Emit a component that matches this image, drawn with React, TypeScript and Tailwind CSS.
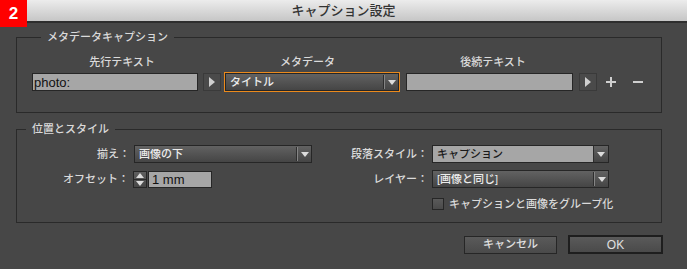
import React from "react";

const FONT = "font-[family-name:'Liberation_Sans','Noto_Sans_CJK_JP',sans-serif]";

function Tri({ up = false, color = "#dcdcdc" }: { up?: boolean; color?: string }) {
  return (
    <svg width="8" height="5" viewBox="0 0 8 5">
      <polygon points={up ? "0,5 8,5 4,0" : "0,0 8,0 4,5"} fill={color} />
    </svg>
  );
}

function DropArrow() {
  return (
    <div className="flex h-full items-center">
      <div className="h-[14px] w-px bg-[#2e2e2e]" />
      <div className="h-[14px] w-px bg-[#858585]" />
      <div className="flex w-[13px] justify-center">
        <Tri />
      </div>
    </div>
  );
}

function Select({
  text,
  w,
  light = false,
  focused = false,
}: {
  text: string;
  w: string;
  light?: boolean;
  focused?: boolean;
}) {
  const inner = (
    <div
      className={`flex h-[18px] items-center border border-[#262626] ${
        light
          ? "bg-[#a6a6a6] text-[#1a1a1a]"
          : "bg-gradient-to-b from-[#626262] to-[#454545] text-[#ececec]"
      }`}
    >
      <span className="flex-1 truncate pl-[4px] text-[11px] font-medium leading-none">{text}</span>
      {light ? (
        <div className="flex h-full items-center bg-gradient-to-b from-[#626262] to-[#454545]">
          <div className="h-full w-px bg-[#2e2e2e]" />
          <div className="flex w-[14px] justify-center">
            <Tri />
          </div>
        </div>
      ) : (
        <DropArrow />
      )}
    </div>
  );
  if (focused) {
    return <div className={`${w} border border-[#ec8a1c]`}>{inner}</div>;
  }
  return <div className={w}>{inner}</div>;
}

function Field({ text, w }: { text?: string; w: string }) {
  return (
    <div
      className={`${w} flex h-[18px] items-center border border-[#262626] bg-[#a6a6a6] pl-[1px] text-[13px] leading-none text-[#111]`}
    >
      {text}
    </div>
  );
}

function ArrowBtn() {
  return (
    <div className="flex h-[18px] w-[18px] items-center justify-center border border-[#3a3a3a] bg-[#4a4a4a]">
      <svg width="6" height="10" viewBox="0 0 6 10">
        <polygon points="0,0 6,5 0,10" fill="#d0d0d0" />
      </svg>
    </div>
  );
}

function Label({ children, w }: { children: React.ReactNode; w: string }) {
  return (
    <div className={`${w} shrink-0 pr-[4px] text-right text-[11px] font-medium leading-none text-[#dadada]`}>
      {children}
    </div>
  );
}

export default function App() {
  return (
    <div className={`${FONT} relative h-[269px] w-[687px] overflow-hidden bg-[#474747]`}>
      {/* title bar */}
      <div className="flex h-[23px] items-center justify-center border-b-2 border-[#2e2e2e] bg-gradient-to-b from-[#ececec] to-[#c6c6c6]">
        <span className="text-[13px] font-medium leading-none text-[#333]">キャプション設定</span>
      </div>
      <div className="absolute left-0 top-0 flex h-[27px] w-[27px] items-center justify-center bg-[#ff0000] text-[17px] font-bold leading-none text-white">
        2
      </div>

      <div className="pl-[16px] pr-[25px] pt-[7px]">
        {/* section 1 */}
        <fieldset className="border border-[#2a2a2a] pb-[20px] pl-[15px]">
          <legend className="ml-[9px] px-[6px] text-[11px] font-medium leading-[14px] text-[#dadada]">
            メタデータキャプション
          </legend>
          <div className="-ml-[15px] mt-[11px] flex text-[11px] font-medium leading-[14px] text-[#dadada]">
            <div className="w-[15px]" />
            <div className="w-[180px] text-center">先行テキスト</div>
            <div className="w-[191px] text-center">メタデータ</div>
            <div className="w-[180px] text-center">後続テキスト</div>
          </div>
          <div className="mt-[3px] flex items-center">
            <Field text="photo:" w="w-[166px]" />
            <div className="ml-[5px]">
              <ArrowBtn />
            </div>
            <div className="ml-[3px]">
              <Select text="タイトル" w="w-[176px]" focused />
            </div>
            <div className="ml-[6px]">
              <Field w="w-[167px]" />
            </div>
            <div className="ml-[6px]">
              <ArrowBtn />
            </div>
            <svg className="ml-[9px]" width="10" height="10" viewBox="0 0 10 10">
              <rect x="4" y="0" width="2" height="10" fill="#cfcfcf" />
              <rect x="0" y="4" width="10" height="2" fill="#cfcfcf" />
            </svg>
            <svg className="ml-[17px]" width="10" height="2" viewBox="0 0 10 2">
              <rect x="0" y="0" width="10" height="2" fill="#cfcfcf" />
            </svg>
          </div>
        </fieldset>

        {/* section 2 */}
        <fieldset className="mt-[9px] border border-[#2a2a2a] pb-[12px]">
          <legend className="ml-[9px] px-[6px] text-[11px] font-medium leading-[14px] text-[#dadada]">
            位置とスタイル
          </legend>
          <div className="mt-[9px] flex items-center">
            <div className="flex w-[295px] items-center">
              <Label w="w-[117px]">揃え：</Label>
              <Select text="画像の下" w="w-[178px]" />
            </div>
            <Label w="w-[120px]">段落スタイル：</Label>
            <Select text="キャプション" w="w-[177px]" light />
          </div>
          <div className="mt-[7px] flex items-center">
            <div className="flex w-[295px] items-center">
              <Label w="w-[116px]">オフセット：</Label>
              <div className="flex h-[17px] w-[14px] flex-col border border-[#262626] bg-gradient-to-b from-[#5e5e5e] to-[#474747]">
                <div className="flex flex-1 items-center justify-center border-b border-[#2a2a2a]">
                  <Tri up />
                </div>
                <div className="flex flex-1 items-center justify-center">
                  <Tri />
                </div>
              </div>
              <div className="ml-[1px] flex h-[17px] w-[64px] items-center border border-[#262626] bg-[#a6a6a6] pl-[3px] text-[13px] leading-none text-[#111]">
                1 mm
              </div>
            </div>
            <Label w="w-[120px]">レイヤー：</Label>
            <Select text="[画像と同じ]" w="w-[177px]" />
          </div>
          <div className="mt-[10px] flex items-center">
            <div className="w-[415px]" />
            <div className="h-[12px] w-[12px] border border-[#262626] bg-gradient-to-b from-[#5a5a5a] to-[#4a4a4a]" />
            <span className="ml-[5px] text-[11px] font-medium leading-none text-[#dadada]">
              キャプションと画像をグループ化
            </span>
          </div>
        </fieldset>
      </div>

      {/* buttons */}
      <div className="mt-[12px] flex items-center justify-end pr-[24px]">
        <div className="flex h-[18px] w-[93px] items-center justify-center border border-[#262626] bg-gradient-to-b from-[#5a5a5a] to-[#4a4a4a] text-[11px] font-medium leading-none text-[#e0e0e0]">
          キャンセル
        </div>
        <div className="ml-[11px] flex h-[19px] w-[95px] items-center justify-center border-2 border-[#1e1e1e] bg-gradient-to-b from-[#5a5a5a] to-[#4a4a4a] text-[12px] leading-none text-[#e0e0e0]">
          OK
        </div>
      </div>
    </div>
  );
}
